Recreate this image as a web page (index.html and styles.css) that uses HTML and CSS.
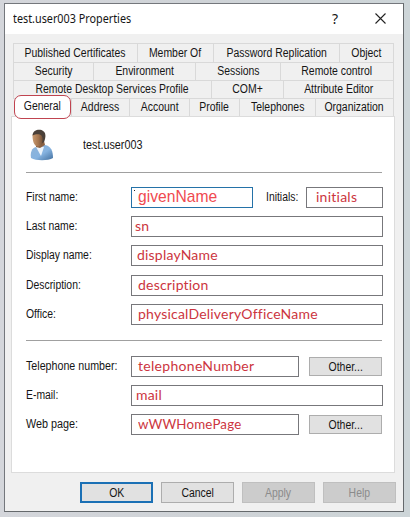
FILE: index.html
```html
<!DOCTYPE html>
<html lang="en">
<head>
<meta charset="utf-8">
<title>test.user003 Properties</title>
<link rel="stylesheet" href="styles.css">
</head>
<body>
<main class="dialog">
  <header class="titlebar">
    <h1 class="title">test.user003 Properties</h1>
    <span class="help">?</span>
    <svg class="close" viewBox="0 0 11 11" width="11" height="11"><path d="M.5 .5l10 10M10.5 .5l-10 10"/></svg>
  </header>
  <nav class="tabs">
    <div class="row r1"><a><span>Published Certificates</span></a><a><span>Member Of</span></a><a><span>Password Replication</span></a><a><span>Object</span></a></div>
    <div class="row r2"><a><span>Security</span></a><a><span>Environment</span></a><a><span>Sessions</span></a><a><span>Remote control</span></a></div>
    <div class="row r3"><a><span>Remote Desktop Services Profile</span></a><a><span>COM+</span></a><a><span>Attribute Editor</span></a></div>
    <div class="row r4"><a class="active"><span>General</span></a><a><span>Address</span></a><a><span>Account</span></a><a><span>Profile</span></a><a><span>Telephones</span></a><a><span>Organization</span></a></div>
  </nav>
  <section class="page">
    <div class="identity">
      <svg class="avatar" viewBox="0 0 24 32" width="24" height="32">
        <defs>
          <linearGradient id="shirt" x1="0" y1="0" x2="1" y2="1"><stop offset="0" stop-color="#8fb4d8"/><stop offset=".55" stop-color="#86b3e0"/><stop offset="1" stop-color="#426f9e"/></linearGradient>
          <linearGradient id="skin" x1="0" y1="0" x2="1" y2="0"><stop offset="0" stop-color="#c99a70"/><stop offset=".5" stop-color="#a4754f"/><stop offset="1" stop-color="#5d4230"/></linearGradient>
        </defs>
        <path d="M1 29C0 23 2 19 6 18l9-2c6 1 8 6 8 13-5 3-17 3-22 0z" fill="url(#shirt)"/>
        <path d="M6 18l3-1 5 1-3 9z" fill="#edf4fb"/>
        <path d="M6 14l8-2 1 4-5 3-4-1z" fill="#8a6042"/>
        <path d="M2.500 6.500C3 2.500 7 1 10 2c5 1 5 5 3.500 10-1 4-3 5.500-5.500 5.500-4 0-5.500-6-5.500-11z" fill="url(#skin)"/>
        <path d="M2.500 6.500C3 1 8 0 11.500 1c5 2 4.500 7 2.500 12l-2 1c1-3 1-5-.5-7.500-2-2-6-1.500-9 0z" fill="#4a4039"/>
      </svg>
      <span class="name tx">test.user003</span>
    </div>
    <hr>
    <div class="fields">
      <div class="field"><label class="tx">First name:</label><div class="box focus"><i class="caret"></i><span class="given">givenName</span></div><label class="tx initials">Initials:</label><div class="box small"><span>initials</span></div></div>
      <div class="field"><label class="tx">Last name:</label><div class="box"><span>sn</span></div></div>
      <div class="field"><label class="tx">Display name:</label><div class="box"><span class="v-dn">displayName</span></div></div>
      <div class="field late"><label class="tx">Description:</label><div class="box"><span class="v-in">description</span></div></div>
      <div class="field"><label class="tx">Office:</label><div class="box"><span class="v-in">physicalDeliveryOfficeName</span></div></div>
    </div>
    <hr>
    <div class="fields contact">
      <div class="field"><label class="tx wide">Telephone number:</label><div class="box"><span class="v-te">telephoneNumber</span></div><button class="other"><span>Other...</span></button></div>
      <div class="field"><label class="tx">E-mail:</label><div class="box"><span class="v-ma">mail</span></div></div>
      <div class="field"><label class="tx web">Web page:</label><div class="box"><span class="v-we">wWWHomePage</span></div><button class="other"><span>Other...</span></button></div>
    </div>
  </section>
  <footer class="actions">
    <button class="ok"><span>OK</span></button><button><span>Cancel</span></button><button disabled><span>Apply</span></button><button disabled><span>Help</span></button>
  </footer>
</main>
</body>
</html>
```
FILE: styles.css
```css
* { box-sizing: border-box; }
body { margin: 0; width: 410px; height: 517px; padding: 3px 0 0 4px; overflow: hidden; background: linear-gradient(90deg, #d4d6db, #cfd3d7 50%, #cdd5d8); font: 12px/18px "Liberation Sans", sans-serif; color: #151515; }
.dialog { width: 400px; height: 509px; border: 1px solid #74777c; border-right-color: #65696c; border-bottom-color: #65696c; background: #f0f0f0; display: flex; flex-direction: column; }
.titlebar { height: 30px; flex: none; display: flex; align-items: center; background: #fff; padding: 0 17px 0 8px; }
.title { margin: 0; flex: 1; font: 12px/16px "Noto Sans", sans-serif; white-space: nowrap; transform: scaleX(.9); transform-origin: left; }
.help { font: 14px/16px "Noto Sans", sans-serif; margin-right: 37px; }
.close { position: relative; top: -1px; fill: none; stroke: #222; stroke-width: 1.1; }
.tabs { flex: none; margin: 9px 9px 0 8px; border-top: 1px solid #d9d9d9; border-right: 1px solid #d9d9d9; }
.row { display: grid; height: 18px; }
.row a { border-left: 1px solid #d9d9d9; border-bottom: 1px solid #d9d9d9; display: flex; justify-content: center; align-items: center; white-space: nowrap; min-width: 0; }
.row span, button span { transform: scaleX(.87); }
.r1 { grid-template-columns: 124px 76px 126px 1fr; }
.r2 { grid-template-columns: 80px 102px 85px 1fr; }
.r3 { grid-template-columns: 198px 72px 1fr; }
.r4 { grid-template-columns: 58px 58px 60px 50px 76px 1fr; }
.row .active { position: relative; z-index: 1; margin: -3px 0 -2px 1px; padding-bottom: 3px; background: #fff; border: 1px solid #c04450; border-radius: 7px; }
.page { flex: none; margin: 0 8px 0 6px; height: 357px; background: #fff; border: 1px solid #dcdcdc; padding: 0 11px 0 14px; }
.identity { height: 55px; display: flex; align-items: center; padding: 0 0 0 4px; }
.avatar { flex: none; margin-top: 1px; }
.name { margin-left: 29px; }
.tx { white-space: nowrap; transform: translateY(-1px) scaleX(.865); transform-origin: left; }
.name { transform: scaleX(.9); }
.wide { transform: translateY(-1px) scaleX(.89); }
.web { transform: translateY(-1px) scaleX(.9); }
hr { margin: 0 1px 0 0; border: 0; height: 1px; background: #a0a0a0; }
.fields { padding-top: 14px; display: grid; gap: 8px; margin-bottom: 15px; }
.contact { padding-top: 15px; }
.field { display: flex; align-items: center; height: 21px; }
.late { margin-top: 1px; margin-bottom: -1px; }
.late + .field { margin-top: 1px; margin-bottom: -1px; }
.late + .field + *, .field:last-child { margin-bottom: 0; }
.field label { width: 105px; flex: none; }
.field .initials { width: 40px; margin-left: 13px; }
.box { position: relative; flex: 1; height: 21px; border: 1px solid #77777b; background: #fff; display: flex; align-items: center; padding-left: 3px; color: #cc3540; font: 14px/19px Lato, sans-serif; letter-spacing: .2px; font-variant-ligatures: none; white-space: nowrap; }
.box span { position: relative; top: -1px; transform-origin: left; }
.box.small { flex: 0 0 77px; padding-left: 9px; letter-spacing: .25px; }
.focus { border-color: #2472a8; padding-left: 6px; color: #f04a50; font: 17px/19px "Liberation Sans", sans-serif; letter-spacing: 0; }
.given { transform: scaleX(.92); }
.caret { position: absolute; left: 2px; top: 2px; width: 1px; height: 1px; background: #222; }
.v-dn { margin-left: 2px; }
.v-in, .v-te, .v-we { margin-left: 3px; }
.v-te { letter-spacing: .3px; }
.v-we { transform: scaleX(.95); }
.v-ma { margin-left: 1px; }
button { height: 21px; width: 73px; padding: 0; border: 1px solid #adadad; background: #e1e1e1; color: #151515; font: 12px/18px "Liberation Sans", sans-serif; display: flex; align-items: center; justify-content: center; }
.other { height: 19px; margin: 0 1px 0 10px; }
.actions { display: flex; gap: 8px; margin: 9px 0 0 75px; }
.ok { border: 2px solid #1b70b5; }
button:disabled { background: #ccc; border-color: #bfbfbf; color: #8b8b8b; }
```
